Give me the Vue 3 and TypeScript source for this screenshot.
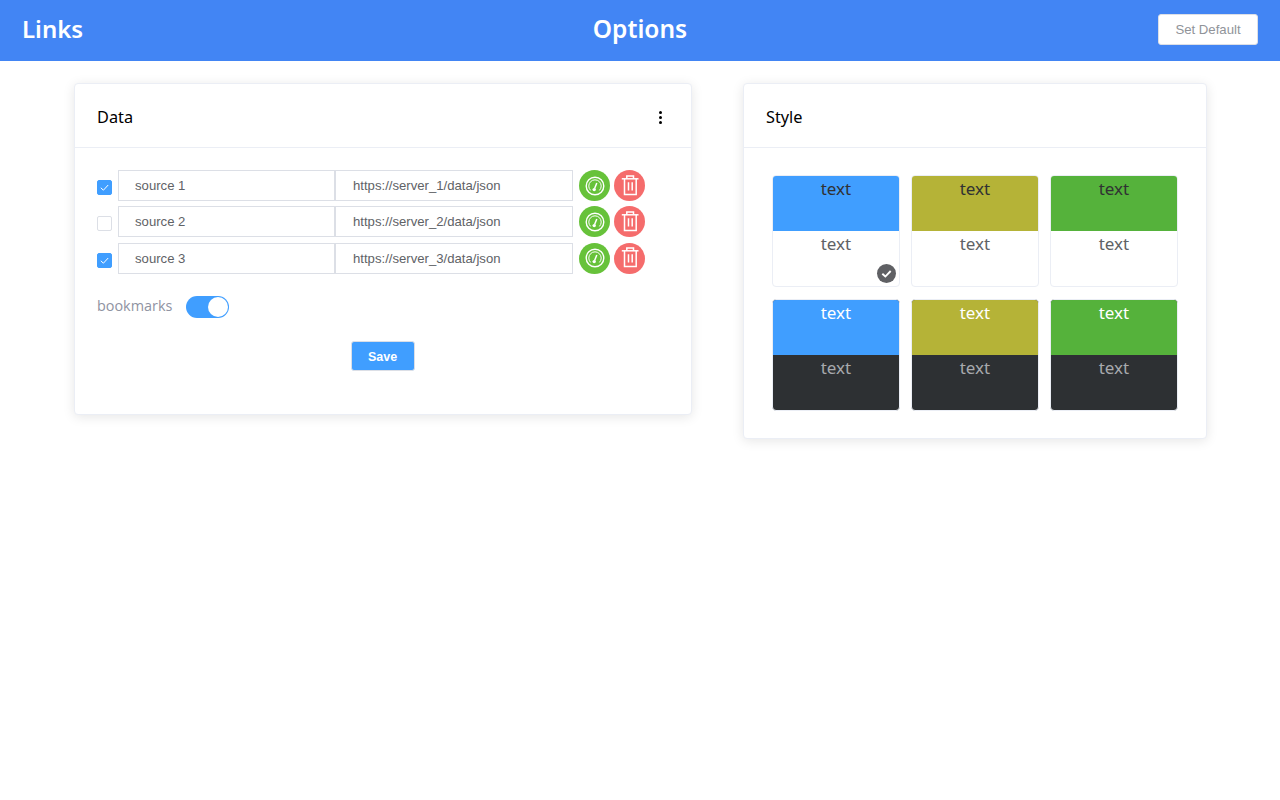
<script setup lang="ts">
interface Source { name: string; url: string; checked: boolean }
interface Tile { color: string; dark: boolean; selected: boolean }

const sources: Source[] = [
  { name: 'source 1', url: 'https://server_1/data/json', checked: true },
  { name: 'source 2', url: 'https://server_2/data/json', checked: false },
  { name: 'source 3', url: 'https://server_3/data/json', checked: true },
]

const colors = ['#409eff', '#b5b337', '#55b23b']
const tiles: Tile[] = [
  ...colors.map((color, i) => ({ color, dark: false, selected: i === 0 })),
  ...colors.map((color) => ({ color, dark: true, selected: false })),
]
</script>

<template>
  <div class="page">
    <header class="topbar">
      <div class="brand">Links</div>
      <div class="title">Options</div>
      <button class="default-btn" type="button">Set Default</button>
    </header>

    <main class="content">
      <section class="card card-data">
        <div class="card-head">
          <span>Data</span>
          <span class="more" aria-label="More"><i></i><i></i><i></i></span>
        </div>
        <div class="data-body">
          <div class="rows">
            <div v-for="s in sources" :key="s.name" class="row">
              <span class="check" :class="{ on: s.checked }">
                <svg v-if="s.checked" viewBox="0 0 15 15" width="15" height="15">
                  <path d="M3.8 7.8 L6.4 10.2 L11.2 5" fill="none" stroke="#fff" stroke-width="1" />
                </svg>
              </span>
              <input class="field field-name" :value="s.name" readonly />
              <input class="field field-url" :value="s.url" readonly />
              <button class="round green" type="button" aria-label="Test">
                <svg viewBox="0 0 24 24" width="24" height="24" fill="none" stroke="#fff">
                  <circle cx="12" cy="12" r="8.8" stroke-width="1.4" />
                  <path d="M7.6 16.4 A6.2 6.2 0 1 1 16.4 16.4" stroke-width="1" />
                  <path d="M13.8 9 L11.6 14.5" stroke-width="1.5" />
                  <circle cx="11.2" cy="15.6" r="1.7" fill="#fff" stroke="none" />
                </svg>
              </button>
              <button class="round red" type="button" aria-label="Delete">
                <svg viewBox="0 0 24 24" width="24" height="24" fill="none" stroke="#fff" stroke-width="1.5">
                  <path d="M3.8 4.8 H20.5" />
                  <path d="M8.8 4.8 V2 H15.5 V4.8" />
                  <path d="M6.5 4.8 V20.6 H18.2 V4.8" />
                  <path d="M10.5 8.2 V16.6 M14.2 8.2 V16.6" />
                </svg>
              </button>
            </div>
          </div>
          <div class="bookmarks">
            <span class="bm-label">bookmarks</span>
            <span class="switch"><span class="knob"></span></span>
          </div>
          <div class="save-line">
            <button class="save" type="button">Save</button>
          </div>
        </div>
      </section>

      <section class="card card-style">
        <div class="card-head"><span>Style</span></div>
        <div class="tiles">
          <div v-for="(t, i) in tiles" :key="i" class="tile" :class="{ dark: t.dark }">
            <div class="tile-top" :style="{ backgroundColor: t.color }">text</div>
            <div class="tile-bottom">text</div>
            <span v-if="t.selected" class="badge">
              <svg viewBox="0 0 20 20" width="19" height="19">
                <path d="M5.6 10.2 L8.8 13.2 L14.4 7.4" fill="none" stroke="#fff" stroke-width="2" />
              </svg>
            </span>
          </div>
        </div>
      </section>
    </main>
  </div>
</template>

<style>
html, body { margin: 0; background: #fff; }
</style>

<style scoped>
.page {
  min-height: 800px;
  font-family: "Open Sans", "Noto Sans", sans-serif;
  color: #000;
}
.topbar {
  height: 61px;
  background: #4285f4;
  display: grid;
  grid-template-columns: 1fr auto 1fr;
  align-items: center;
  padding: 0 22px;
  color: #fff;
}
.brand, .title {
  font-family: "Noto Sans", "Open Sans", sans-serif;
  font-size: 24.5px;
  font-weight: 600;
  line-height: 1;
  padding-bottom: 2px;
}
.brand { font-size: 24px; padding-bottom: 3px; }
.default-btn {
  justify-self: end;
  width: 100px;
  height: 31px;
  margin-bottom: 2px;
  background: #fff;
  border: 1px solid #dcdfe6;
  border-radius: 3px;
  color: #909399;
  font: 13.2px "Liberation Sans", Arial, sans-serif;
  padding: 0;
}
.content {
  display: flex;
  align-items: flex-start;
  gap: 51px;
  padding: 22px 0 0 74px;
}
.card {
  box-sizing: border-box;
  background: #fff;
  border: 1px solid #ebeef5;
  border-radius: 4px;
  box-shadow: 0 2px 12px rgba(0, 0, 0, 0.1);
}
.card-data { width: 618px; height: 332px; }
.card-style { width: 464px; height: 356px; }
.card-head {
  box-sizing: border-box;
  height: 64px;
  padding: 2px 22px 0;
  display: flex;
  align-items: center;
  justify-content: space-between;
  border-bottom: 1px solid #ebeef5;
  font-family: "Noto Sans", "Open Sans", sans-serif;
  font-size: 16.3px;
}
.more {
  display: flex;
  flex-direction: column;
  gap: 2px;
  margin-right: 7px;
  margin-top: 2px;
}
.more i {
  width: 3px;
  height: 3px;
  background: #000;
  border-radius: 50%;
}
.data-body { padding: 22px 22px 0; }
.rows {
  display: flex;
  flex-direction: column;
  gap: 5.4px;
}
.row {
  display: flex;
  align-items: center;
  height: 31px;
}
.check {
  box-sizing: border-box;
  width: 15px;
  height: 15px;
  margin: 4px 6px 0 0;
  border: 1px solid #dcdfe6;
  border-radius: 2px;
  background: #fff;
  flex: none;
}
.check svg { display: block; margin: -1px; }
.check.on { background: #409eff; border-color: #409eff; }
.field {
  box-sizing: border-box;
  height: 31px;
  border: 1px solid #dcdfe6;
  background: #fff;
  padding: 0 16px;
  font: 13.15px "Liberation Sans", Arial, sans-serif;
  color: #606266;
  outline: none;
  margin: 0;
}
.field-name { width: 218px; border-right-width: 2px; }
.field-url { width: 237px; margin-right: 6px; border-left-width: 0; padding-left: 17px; }
.round {
  width: 31px;
  height: 31px;
  border: 0;
  border-radius: 50%;
  padding: 0;
  display: flex;
  align-items: center;
  justify-content: center;
  flex: none;
}
.round.green { background: #67c23a; margin-right: 4px; }
.round.red { background: #f56c6c; }
.bookmarks {
  display: flex;
  align-items: center;
  gap: 14px;
  margin-top: 20px;
  height: 24px;
  font-size: 14.4px;
  color: #8f93a2;
}
.switch {
  position: relative;
  width: 43px;
  height: 22px;
  margin-top: 2px;
  background: #409eff;
  border-radius: 11px;
}
.knob {
  position: absolute;
  right: 1px;
  top: 1px;
  width: 20px;
  height: 20px;
  background: #fff;
  border-radius: 50%;
}
.save-line {
  display: flex;
  justify-content: center;
  margin-top: 23px;
}
.save {
  width: 64px;
  height: 30px;
  margin-right: 1px;
  border: 1px solid #dcdfe6;
  border-radius: 3px;
  background: #409eff;
  color: #fff;
  font: 700 12.5px "Liberation Sans", Arial, sans-serif;
  padding: 2px 0 0;
}
.tiles {
  display: grid;
  grid-template-columns: repeat(3, 128px);
  gap: 12px 11px;
  padding: 27px 28px 0;
}
.tile {
  position: relative;
  box-sizing: border-box;
  height: 112px;
  border: 1px solid #ebeef5;
  border-radius: 4px;
  overflow: hidden;
  text-align: center;
  font-family: "Noto Sans", "Open Sans", sans-serif;
  font-size: 17px;
  line-height: 26px;
  color: #606266;
  background: #fff;
}
.tile-top {
  height: 55px;
  color: #303133;
}
.tile-bottom { height: 55px; }
.tile.dark {
  background: #2d3033;
  color: #a7a9ad;
}
.tile.dark .tile-top { color: #fff; }
.badge {
  position: absolute;
  right: 3px;
  bottom: 3px;
  width: 19px;
  height: 19px;
  background: #5f6064;
  border-radius: 50%;
  display: block;
}
.badge svg { display: block; }
</style>
